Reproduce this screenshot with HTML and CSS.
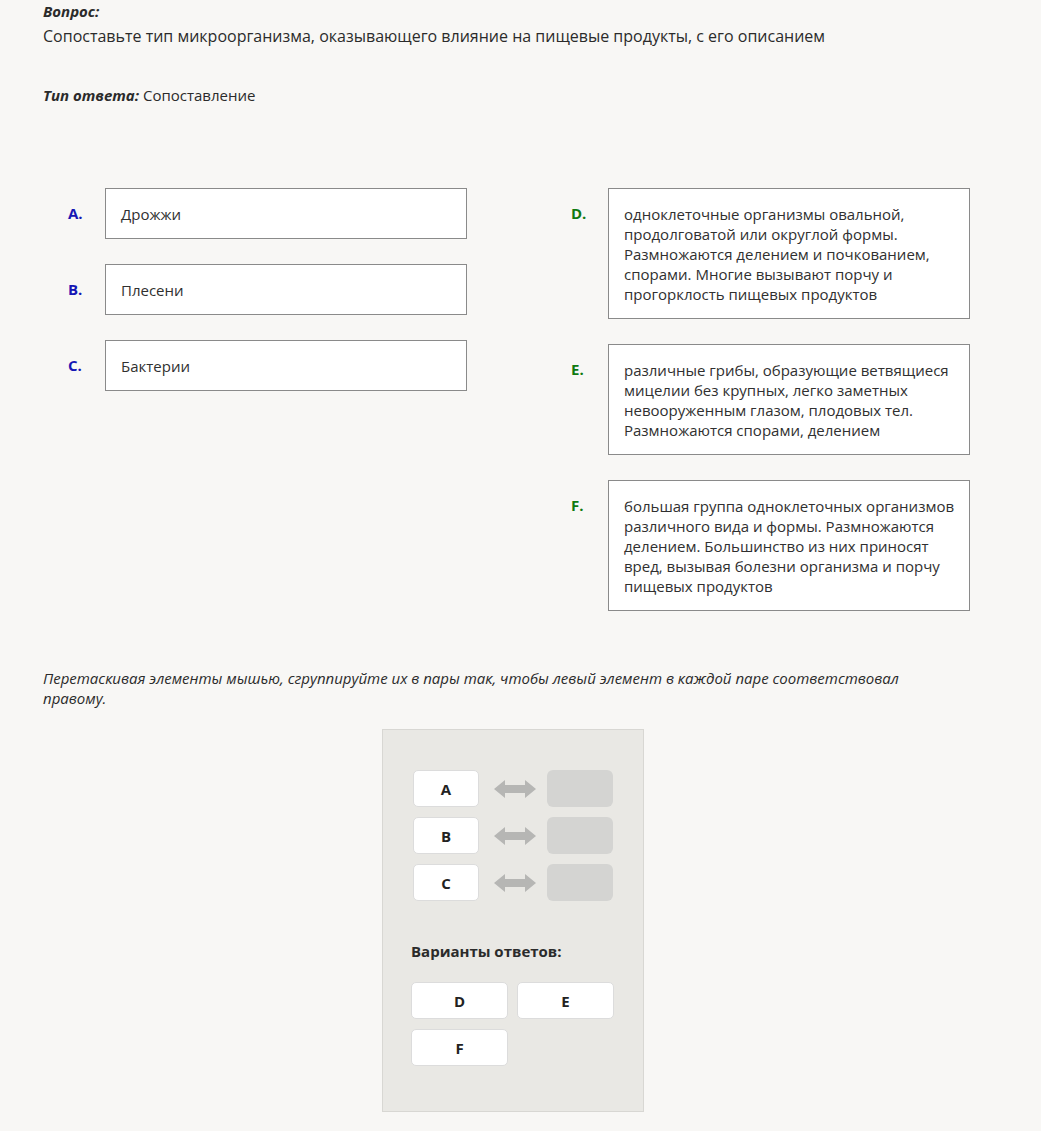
FILE: index.html
```html
<!DOCTYPE html>
<html lang="ru">
<head>
<meta charset="utf-8">
<title>Сопоставление</title>
<link rel="stylesheet" href="styles.css">
</head>
<body>
<main class="page">
  <section class="question">
    <div class="q-title">Вопрос:</div>
    <p class="q-text">Сопоставьте тип микроорганизма, оказывающего влияние на пищевые продукты, с его описанием</p>
    <p class="q-type"><span class="q-type-label">Тип ответа:</span> Сопоставление</p>
  </section>

  <section class="columns">
    <div class="col">
      <div class="item">
        <span class="mark mark-left">A.</span>
        <div class="box">Дрожжи</div>
      </div>
      <div class="item">
        <span class="mark mark-left">B.</span>
        <div class="box">Плесени</div>
      </div>
      <div class="item">
        <span class="mark mark-left">C.</span>
        <div class="box">Бактерии</div>
      </div>
    </div>
    <div class="col">
      <div class="item">
        <span class="mark mark-right">D.</span>
        <div class="box">одноклеточные организмы овальной,<br>продолговатой или округлой формы.<br>Размножаются делением и почкованием,<br>спорами. Многие вызывают порчу и<br>прогорклость пищевых продуктов</div>
      </div>
      <div class="item">
        <span class="mark mark-right">E.</span>
        <div class="box">различные грибы, образующие ветвящиеся<br>мицелии без крупных, легко заметных<br>невооруженным глазом, плодовых тел.<br>Размножаются спорами, делением</div>
      </div>
      <div class="item">
        <span class="mark mark-right">F.</span>
        <div class="box">большая группа одноклеточных организмов<br>различного вида и формы. Размножаются<br>делением. Большинство из них приносят<br>вред, вызывая болезни организма и порчу<br>пищевых продуктов</div>
      </div>
    </div>
  </section>

  <p class="hint">Перетаскивая элементы мышью, сгруппируйте их в пары так, чтобы левый элемент в каждой паре соответствовал правому.</p>

  <section class="board">
    <div class="pairs">
      <div class="pair">
        <div class="chip chip-small">A</div>
        <svg class="arrow" viewBox="0 0 42 20" width="42" height="20"><path d="M0 10 L11 1 L11 6 L31 6 L31 1 L42 10 L31 19 L31 14 L11 14 L11 19 Z"/></svg>
        <div class="slot"></div>
      </div>
      <div class="pair">
        <div class="chip chip-small">B</div>
        <svg class="arrow" viewBox="0 0 42 20" width="42" height="20"><path d="M0 10 L11 1 L11 6 L31 6 L31 1 L42 10 L31 19 L31 14 L11 14 L11 19 Z"/></svg>
        <div class="slot"></div>
      </div>
      <div class="pair">
        <div class="chip chip-small">C</div>
        <svg class="arrow" viewBox="0 0 42 20" width="42" height="20"><path d="M0 10 L11 1 L11 6 L31 6 L31 1 L42 10 L31 19 L31 14 L11 14 L11 19 Z"/></svg>
        <div class="slot"></div>
      </div>
    </div>
    <div class="options-title">Варианты ответов:</div>
    <div class="options">
      <div class="chip chip-wide">D</div>
      <div class="chip chip-wide">E</div>
      <div class="chip chip-wide">F</div>
    </div>
  </section>
</main>
</body>
</html>
```

FILE: styles.css
```css
html, body {
  margin: 0;
  padding: 0;
}

body {
  background: #f8f7f5;
  color: #2b2b2b;
  font-family: "Open Sans", "Noto Sans", sans-serif;
  font-size: 15px;
  line-height: 20px;
}

.page {
  padding: 0 43px;
  width: 955px;
}

.q-title {
  font-style: italic;
  font-weight: 700;
  font-size: 15px;
  line-height: 22px;
}

.q-text {
  margin: 2px 0 0;
  font-size: 16px;
  line-height: 24px;
}

.q-type {
  margin: 36px 0 0;
  font-size: 15px;
  line-height: 22px;
}

.q-type-label {
  font-style: italic;
  font-weight: 700;
}

.columns {
  display: flex;
  margin-top: 82px;
  padding-left: 25px;
}

.col {
  display: flex;
  flex: none;
  flex-direction: column;
  gap: 25px;
  width: 503px;
}

.item {
  display: flex;
  align-items: flex-start;
}

.mark {
  width: 37px;
  padding-top: 15px;
  font-weight: 700;
  font-size: 15px;
  line-height: 20px;
}

.mark-left {
  color: #1616b4;
}

.mark-right {
  color: #107a10;
}

.box {
  width: 330px;
  padding: 15px 15px 14px;
  background: #fff;
  border: 1px solid #8a8a8a;
  color: #303030;
  font-size: 15px;
  line-height: 20px;
  white-space: nowrap;
}

.hint {
  width: 900px;
  margin: 57px 0 0;
  font-style: italic;
  font-size: 15px;
  line-height: 20px;
  color: #2b2b2b;
}

.board {
  width: 232px;
  margin: 21px 0 0 339px;
  padding: 40px 0 45px 28px;
  background: #e9e8e4;
  border: 1px solid #d8d7d3;
}

.pairs {
  display: flex;
  flex-direction: column;
  gap: 10px;
  padding-left: 2px;
}

.pair {
  display: flex;
  align-items: center;
}

.chip {
  display: flex;
  align-items: center;
  justify-content: center;
  background: #fff;
  border: 1px solid #dcdcdc;
  border-radius: 5px;
  font-weight: 700;
  font-size: 15px;
  color: #222;
  box-sizing: border-box;
  height: 37px;
}

.chip-small {
  width: 66px;
}

.arrow {
  margin: 0 11px 0 15px;
  fill: #b6b6b4;
}

.slot {
  width: 66px;
  height: 37px;
  background: #d4d4d2;
  border-radius: 6px;
}

.options-title {
  margin-top: 40px;
  font-weight: 700;
  font-size: 15px;
  line-height: 20px;
}

.options {
  display: grid;
  grid-template-columns: 97px 97px;
  gap: 10px 9px;
  margin-top: 21px;
}

.chip-wide {
  width: 97px;
}
```
